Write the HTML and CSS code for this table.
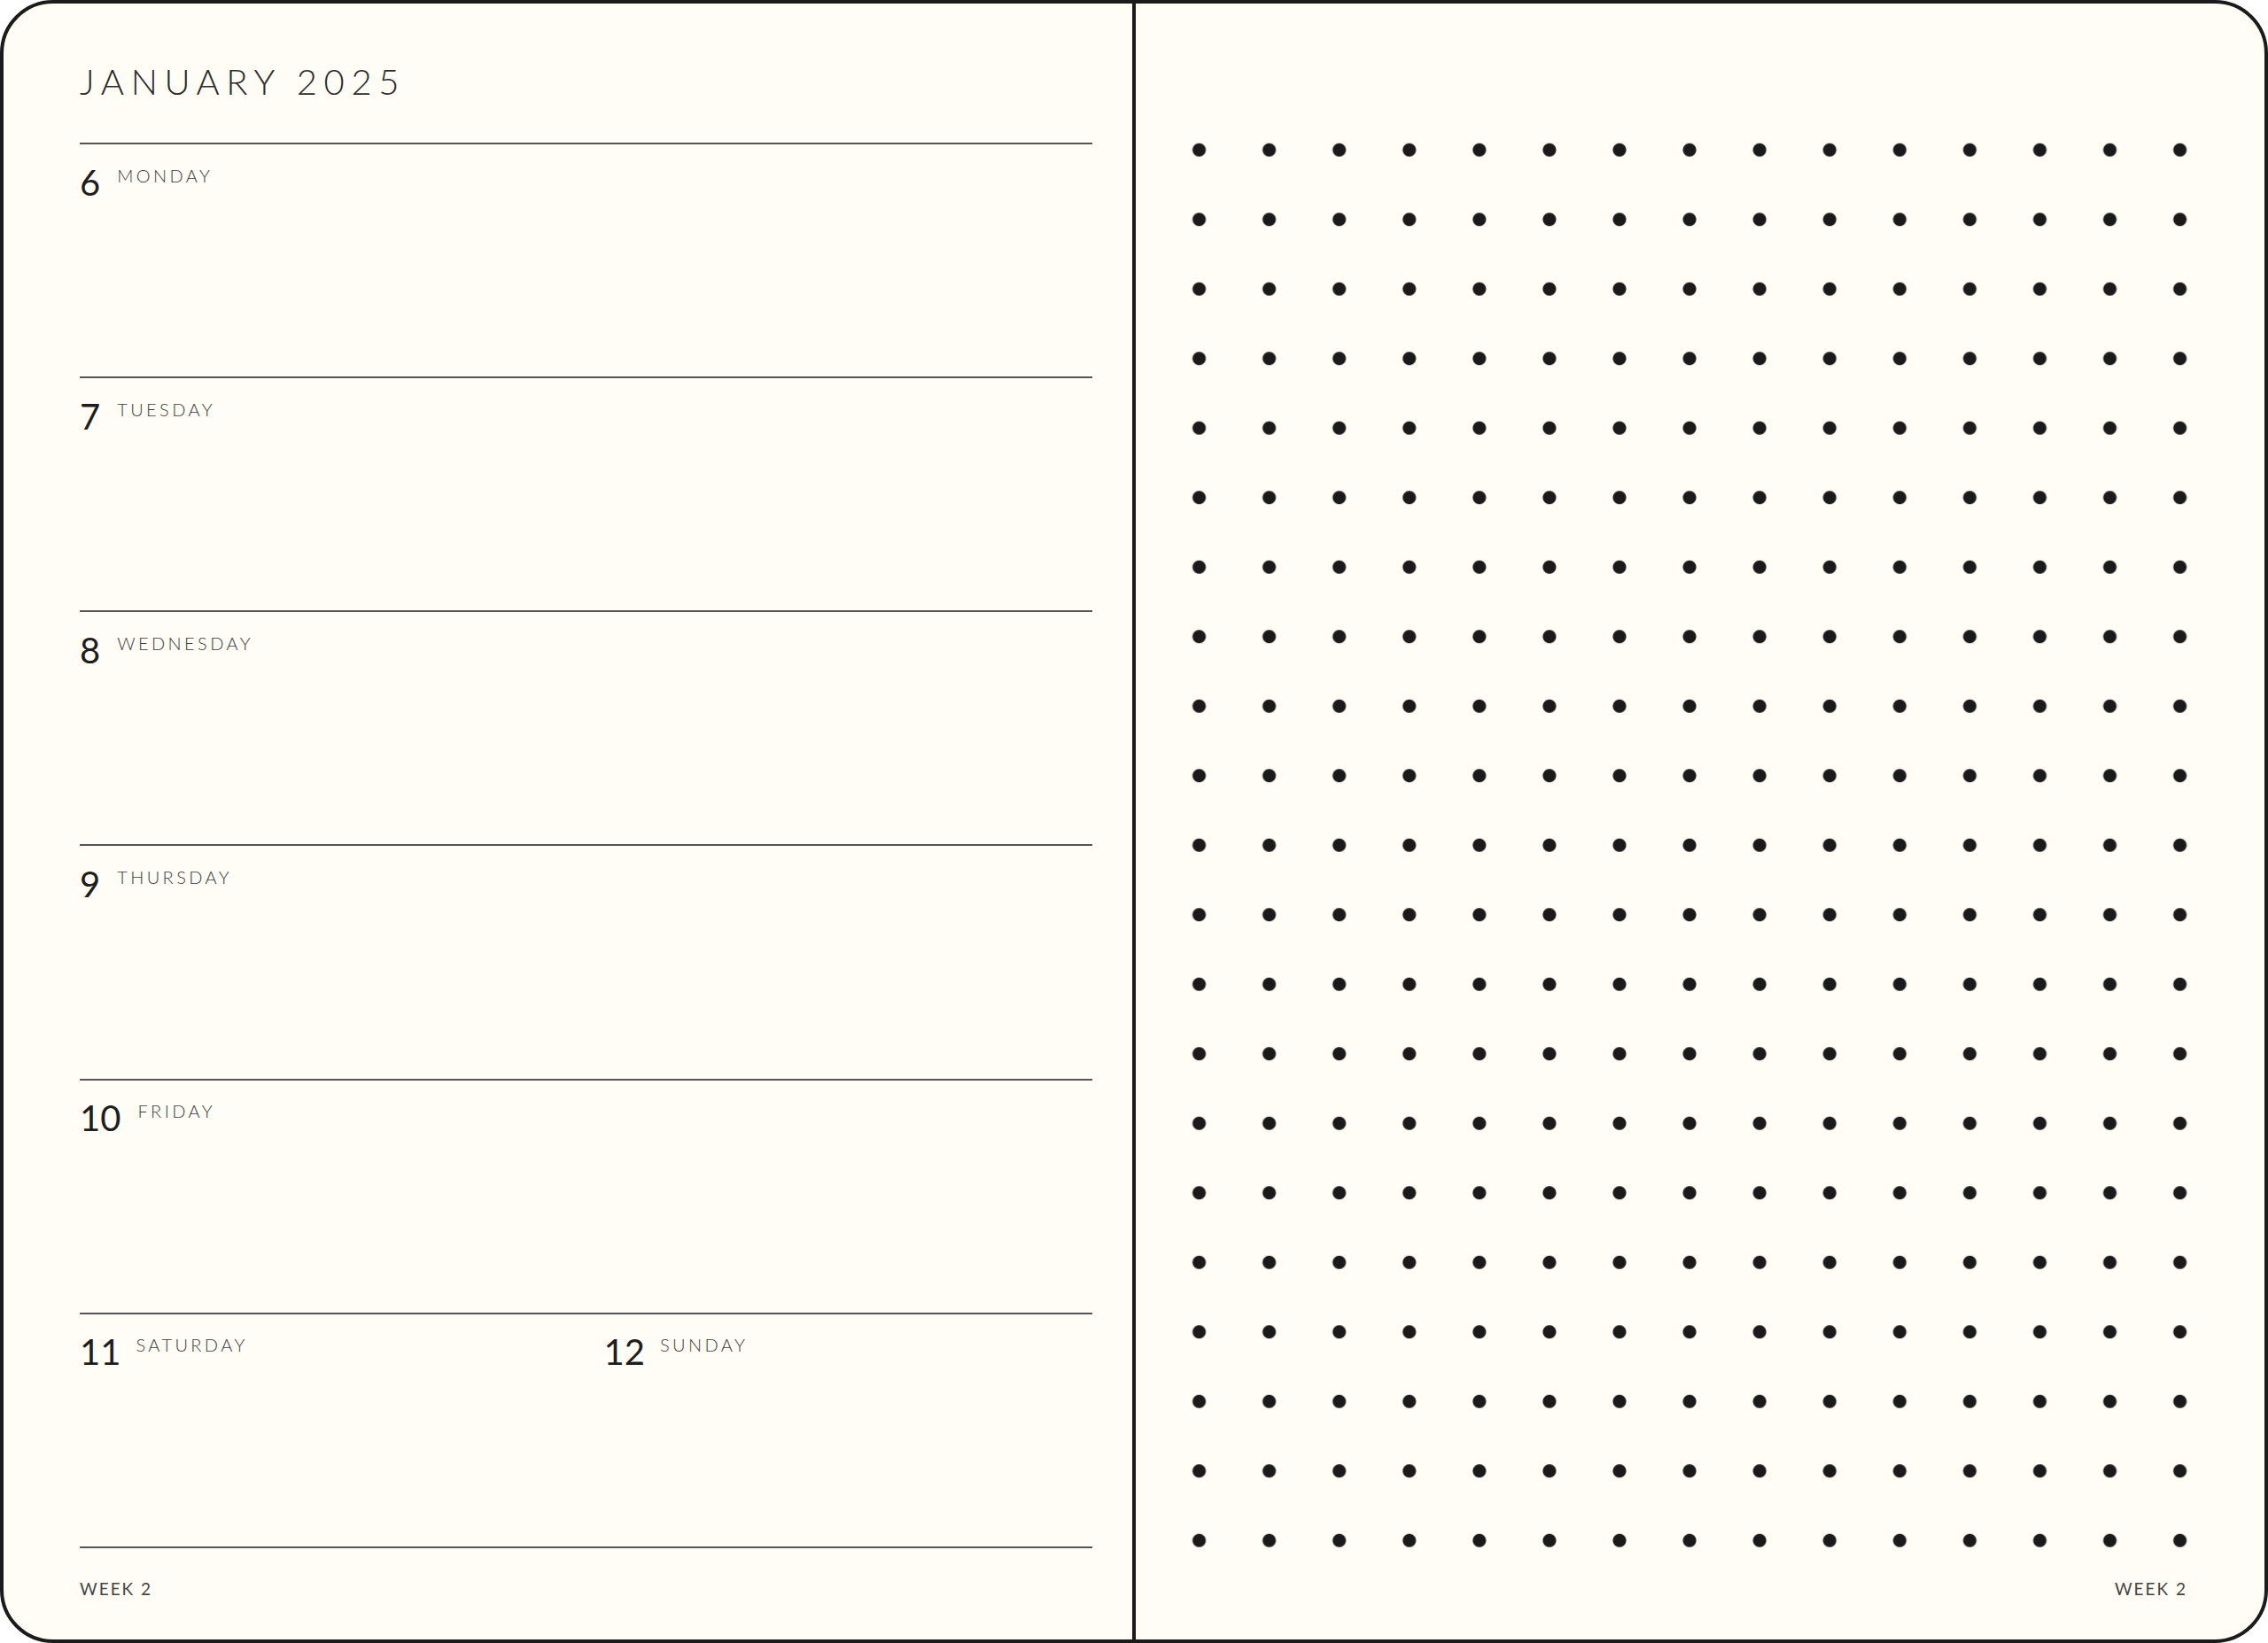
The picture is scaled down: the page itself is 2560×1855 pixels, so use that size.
FILE: index.html
```html
<!DOCTYPE html>
<html lang="en">
<head>
<meta charset="utf-8">
<title>January 2025 – Week 2</title>
<link rel="stylesheet" href="styles.css">
</head>
<body>
<div class="notebook">
  <section class="page page-left">
    <h1 class="month">JANUARY 2025</h1>
    <div class="days">
      <div class="day"><span class="num">6</span><span class="name">MONDAY</span></div>
      <div class="day"><span class="num">7</span><span class="name">TUESDAY</span></div>
      <div class="day"><span class="num">8</span><span class="name">WEDNESDAY</span></div>
      <div class="day"><span class="num">9</span><span class="name">THURSDAY</span></div>
      <div class="day"><span class="num">10</span><span class="name">FRIDAY</span></div>
      <div class="day weekend">
        <div class="half"><span class="num">11</span><span class="name">SATURDAY</span></div>
        <div class="half"><span class="num">12</span><span class="name">SUNDAY</span></div>
      </div>
    </div>
    <footer class="week">WEEK 2</footer>
  </section>
  <div class="spine"></div>
  <section class="page page-right">
    <div class="dots"></div>
    <footer class="week week-right">WEEK 2</footer>
  </section>
</div>
</body>
</html>
```

FILE: styles.css
```css
html, body {
  margin: 0;
  padding: 0;
  background: #ffffff;
}

body {
  font-family: Lato, "Open Sans", sans-serif;
}

.notebook {
  width: 2560px;
  height: 1855px;
  box-sizing: border-box;
  border: 4px solid #1b1b1b;
  border-radius: 60px;
  background: #fffdf6;
  overflow: hidden;
  display: grid;
  grid-template-columns: 1274px 4px minmax(0, 1fr);
}

.spine {
  background: #1b1b1b;
}

.page-left {
  min-width: 0;
  padding: 68px 45px 0 86px;
  display: flex;
  flex-direction: column;
}

.month {
  margin: 0 0 49px 0;
  font-size: 40px;
  line-height: 40px;
  font-weight: 300;
  letter-spacing: 7.6px;
  color: #2a2a2a;
}

.days {
  border-bottom: 2px solid #555;
}

.day {
  box-sizing: border-box;
  height: 264.17px;
  border-top: 2px solid #555;
  padding-top: 22.5px;
  display: flex;
  align-items: flex-start;
  gap: 19px;
}

.weekend {
  display: grid;
  grid-template-columns: 1fr 1fr;
  column-gap: 40px;
}

.half {
  display: flex;
  align-items: flex-start;
  gap: 17px;
}

.num {
  font-size: 40px;
  line-height: 40px;
  font-weight: 400;
  color: #1e1e1e;
}

.name {
  margin-top: 2px;
  font-size: 20px;
  line-height: 20px;
  font-weight: 300;
  letter-spacing: 3.4px;
  color: #3d3d3d;
}

.week {
  margin-top: 36px;
  font-size: 19px;
  line-height: 19px;
  font-weight: 400;
  letter-spacing: 2px;
  color: #444;
}

.page-right {
  min-width: 0;
  padding: 126px 55px 0 32.45px;
  display: flex;
  flex-direction: column;
}

.dots {
  width: 1186.35px;
  height: 1648.5px;
  background-image: radial-gradient(circle at center, #1a1a1a 0, #1a1a1a 7px, rgba(26, 26, 26, 0) 8px);
  background-size: 79.09px 78.5px;
}

.week-right {
  margin-top: 5.5px;
  margin-right: 32px;
  text-align: right;
}
```
